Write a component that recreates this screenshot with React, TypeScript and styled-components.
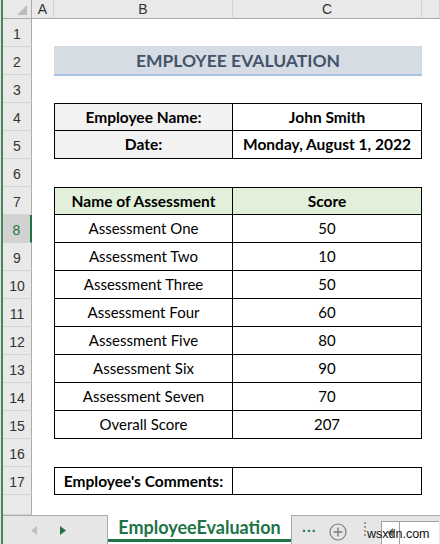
import React from 'react'
import styled, { createGlobalStyle } from 'styled-components'

const GlobalStyle = createGlobalStyle`
  html, body {
    margin: 0;
    padding: 0;
    background: #dfe6e1;
    overflow: hidden;
  }
`

const excelGreen = '#217346'
const cellFont = `'Lato', 'Open Sans', sans-serif`
const headFont = `'Liberation Sans', Arial, sans-serif`

const Window = styled.div`
  position: relative;
  width: 437px;
  height: 544px;
  margin-left: 1px;
  border-left: 2px solid #4a8560;
  background: #fff;
  display: flex;
  flex-direction: column;
  overflow: hidden;
`

const Sheet = styled.div`
  flex: 1;
  display: grid;
  grid-template-columns: 29px 22px 179px 189px 1fr;
  grid-template-rows: 19px repeat(17, 28px) 1fr;
`

const Corner = styled.div`
  grid-row: 1;
  grid-column: 1;
  background: #e9e9e9;
  border-right: 1px solid #ababab;
  border-bottom: 1px solid #ababab;
  display: flex;
  align-items: flex-end;
  justify-content: flex-end;
  padding: 0 4px 3px 0;
  box-sizing: border-box;
`

const ColHead = styled.div<{ $col: number }>`
  grid-row: 1;
  grid-column: ${p => p.$col};
  background: #e9e9e9;
  border-right: 1px solid #d4d4d4;
  border-bottom: 1px solid #ababab;
  box-sizing: border-box;
  display: flex;
  align-items: center;
  justify-content: center;
  font-family: ${headFont};
  font-size: 14px;
  color: #333;
`

const RowHead = styled.div<{ $row: number; $active?: boolean }>`
  grid-row: ${p => p.$row};
  grid-column: 1;
  background: ${p => (p.$active ? '#d2d2d2' : '#e9e9e9')};
  color: ${p => (p.$active ? excelGreen : '#333')};
  border-right: ${p => (p.$active ? `2px solid ${excelGreen}` : '1px solid #ababab')};
  border-bottom: 1px solid #d4d4d4;
  box-sizing: border-box;
  display: flex;
  align-items: flex-end;
  justify-content: center;
  padding-bottom: 4px;
  font-family: ${headFont};
  font-size: 14px;
`

const TitleBand = styled.div`
  grid-row: 3;
  grid-column: 3 / 5;
  margin-top: -1px;
  height: 30px;
  background: #d6dce4;
  border-bottom: 2px solid #a9c2e6;
  box-sizing: border-box;
  display: flex;
  align-items: center;
  justify-content: center;
  font-family: ${cellFont};
  font-weight: 700;
  font-size: 17.5px;
  color: #44546a;
`

const Cell = styled.div<{ $row: number; $col: number; $first?: boolean; $bold?: boolean; $fill?: string }>`
  grid-row: ${p => p.$row};
  grid-column: ${p => p.$col};
  background: ${p => p.$fill || '#fff'};
  border: 1px solid #000;
  border-left: ${p => (p.$col === 4 ? 'none' : '1px solid #000')};
  border-top: ${p => (p.$first ? '1px solid #000' : 'none')};
  box-sizing: border-box;
  display: flex;
  align-items: center;
  justify-content: center;
  padding-bottom: 1px;
  font-family: ${cellFont};
  font-size: ${p => (p.$bold ? '15.5px' : '15px')};
  font-weight: ${p => (p.$bold ? 700 : 400)};
  color: #000;
  white-space: nowrap;
`

const TabBar = styled.div`
  height: 29px;
  display: flex;
  background: #e6e6e6;
`

const NavArea = styled.div`
  width: 104px;
  border-top: 1px solid #ababab;
  display: flex;
  align-items: center;
  gap: 23px;
  padding-left: 28px;
  box-sizing: border-box;
`

const Tab = styled.div`
  width: 185px;
  background: #fff;
  border-left: 1px solid #ababab;
  border-right: 1px solid #ababab;
  box-sizing: border-box;
  display: flex;
  flex-direction: column;
`

const TabLabel = styled.div`
  flex: 1;
  display: flex;
  align-items: center;
  justify-content: center;
  font-family: ${cellFont};
  font-weight: 700;
  font-size: 18px;
  color: ${excelGreen};
  border-bottom: 3px solid ${excelGreen};
  margin-bottom: 2px;
`

const Extras = styled.div`
  flex: 1;
  border-top: 1px solid #ababab;
  display: flex;
  align-items: flex-start;
  box-sizing: border-box;
`

const More = styled.div`
  margin: 3px 0 0 10px;
  font-family: ${headFont};
  font-weight: 700;
  font-size: 14px;
  letter-spacing: 1px;
  color: ${excelGreen};
`

const AddButton = styled.div`
  margin: 7px 0 0 12px;
  display: flex;
`

const Grip = styled.div`
  margin: 6px 0 0 17px;
  width: 2px;
  height: 14px;
  background: repeating-linear-gradient(to bottom, #9a9a9a 0 2px, transparent 2px 4px);
`

const ScrollBox = styled.div<{ $w: number }>`
  margin-top: 5px;
  width: ${p => p.$w}px;
  height: 24px;
  background: #fff;
  border: 1px solid #9f9f9f;
  border-right: none;
  box-sizing: border-box;
  display: flex;
  justify-content: center;
  padding-top: 6px;
`

const ScrollStart = styled(ScrollBox)`
  margin-left: 15px;
`

const Watermark = styled.div`
  position: absolute;
  left: 364px;
  top: 527px;
  font-family: ${headFont};
  font-size: 12.5px;
  color: #111;
`

const Triangle = ({ dir, color }: { dir: 'left' | 'right'; color: string }) => (
  <svg width="6" height="9" viewBox="0 0 6 9">
    <polygon points={dir === 'left' ? '6,0 6,9 0,4.5' : '0,0 0,9 6,4.5'} fill={color} />
  </svg>
)

const assessments: [string, number][] = [
  ['Assessment One', 50],
  ['Assessment Two', 10],
  ['Assessment Three', 50],
  ['Assessment Four', 60],
  ['Assessment Five', 80],
  ['Assessment Six', 90],
  ['Assessment Seven', 70],
  ['Overall Score', 207],
]

export default function App() {
  const rows = Array.from({ length: 18 }, (_, i) => i + 1)

  return (
    <>
      <GlobalStyle />
      <Window>
        <Sheet>
          <Corner>
            <svg width="10" height="10" viewBox="0 0 10 10">
              <polygon points="10,0 10,10 0,10" fill="#bdbdbd" />
            </svg>
          </Corner>
          <ColHead $col={2}>A</ColHead>
          <ColHead $col={3}>B</ColHead>
          <ColHead $col={4}>C</ColHead>
          <ColHead $col={5} />
          {rows.map(r => (
            <RowHead key={r} $row={r + 1} $active={r === 8}>
              {r < 18 ? r : ''}
            </RowHead>
          ))}

          <TitleBand>EMPLOYEE EVALUATION</TitleBand>

          <Cell $row={5} $col={3} $first $bold $fill="#f2f2f2">Employee Name:</Cell>
          <Cell $row={5} $col={4} $first $bold>John Smith</Cell>
          <Cell $row={6} $col={3} $bold $fill="#f2f2f2">Date:</Cell>
          <Cell $row={6} $col={4} $bold>Monday, August 1, 2022</Cell>

          <Cell $row={8} $col={3} $first $bold $fill="#e2efda">Name of Assessment</Cell>
          <Cell $row={8} $col={4} $first $bold $fill="#e2efda">Score</Cell>
          {assessments.map(([name, score], i) => (
            <React.Fragment key={name}>
              <Cell $row={9 + i} $col={3}>{name}</Cell>
              <Cell $row={9 + i} $col={4}>{score}</Cell>
            </React.Fragment>
          ))}

          <Cell $row={18} $col={3} $first $bold>Employee's Comments:</Cell>
          <Cell $row={18} $col={4} $first />
        </Sheet>

        <TabBar>
          <NavArea>
            <Triangle dir="left" color="#bfbfbf" />
            <Triangle dir="right" color={excelGreen} />
          </NavArea>
          <Tab>
            <TabLabel>EmployeeEvaluation</TabLabel>
          </Tab>
          <Extras>
            <More>...</More>
            <AddButton>
              <svg width="18" height="18" viewBox="0 0 18 18">
                <circle cx="9" cy="9" r="8" fill="none" stroke="#7d7d7d" strokeWidth="1.2" />
                <path d="M9 4.5v9M4.5 9h9" stroke="#7d7d7d" strokeWidth="1.4" />
              </svg>
            </AddButton>
            <Grip />
            <ScrollStart $w={18}>
              <Triangle dir="left" color="#7d7d7d" />
            </ScrollStart>
            <ScrollBox $w={40} />
          </Extras>
        </TabBar>
        <Watermark>wsxdn.com</Watermark>
      </Window>
    </>
  )
}
